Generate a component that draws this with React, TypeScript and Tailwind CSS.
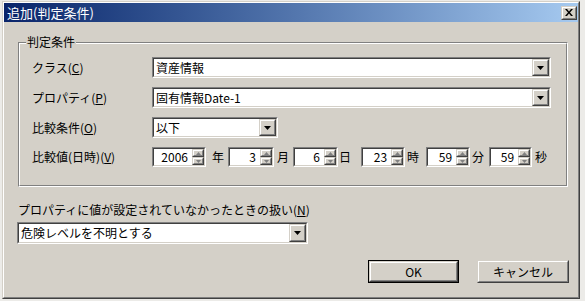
import React from "react";

// classic 3D borders
function Raised({ className = "", children }: { className?: string; children?: React.ReactNode }) {
  return (
    <div className={`border border-t-[#d4d0c8] border-l-[#d4d0c8] border-r-[#404040] border-b-[#404040] ${className}`}>
      <div className="flex h-full w-full items-center justify-center border border-t-white border-l-white border-r-[#808080] border-b-[#808080] bg-[#d4d0c8]">
        {children}
      </div>
    </div>
  );
}

function Sunken({ className = "", children }: { className?: string; children?: React.ReactNode }) {
  return (
    <div className={`border border-t-[#808080] border-l-[#808080] border-r-white border-b-white ${className}`}>
      <div className="flex h-full w-full items-center border border-t-[#404040] border-l-[#404040] border-r-[#d4d0c8] border-b-[#d4d0c8] bg-white">
        {children}
      </div>
    </div>
  );
}

function DownArrow() {
  return (
    <svg width="7" height="4" viewBox="0 0 7 4">
      <path d="M0 0h7L3.5 4z" fill="#000" />
    </svg>
  );
}

function ComboBox({ value, className }: { value: string; className: string }) {
  return (
    <Sunken className={className}>
      <span className="flex-1 truncate pl-[2px] leading-[16px]">{value}</span>
      <Raised className="h-full w-[17px]">
        <DownArrow />
      </Raised>
    </Sunken>
  );
}

function SpinBox({ value, className }: { value: string; className: string }) {
  return (
    <Sunken className={`h-[20px] ${className}`}>
      <span className="flex-1 pr-[4px] text-right leading-[16px]">{value}</span>
      <div className="flex h-full w-[12px] flex-col">
        <Raised className="h-1/2 w-full">
          <svg width="5" height="3" viewBox="0 0 5 3">
            <path d="M2.5 0L5 3H0z" fill="#808080" />
          </svg>
        </Raised>
        <Raised className="h-1/2 w-full">
          <svg width="5" height="3" viewBox="0 0 5 3">
            <path d="M0 0h5L2.5 3z" fill="#808080" />
          </svg>
        </Raised>
      </div>
    </Sunken>
  );
}

function Label({ text, hot }: { text: string; hot: string }) {
  return (
    <span className="w-[120px] leading-[16px]">
      {text}(<span className="underline">{hot}</span>)
    </span>
  );
}

function PushButton({ label, isDefault }: { label: string; isDefault?: boolean }) {
  return (
    <div className={`h-[23px] ${isDefault ? "w-[91px] border border-black" : "w-[92px]"}`}>
      <Raised className="h-full w-full">
        <span className="leading-[16px]">{label}</span>
      </Raised>
    </div>
  );
}

export default function App() {
  return (
    <div className="h-[301px] w-[585px] bg-[#ecebe8] pl-[2px] pt-[1px] font-['Noto_Sans_CJK_JP','Liberation_Sans',sans-serif] text-[12px] text-black">
      <div className="h-[298px] w-[578px] border border-t-[#d4d0c8] border-l-[#d4d0c8] border-r-[#404040] border-b-[#404040]">
        <div className="flex h-full w-full flex-col border border-t-white border-l-white border-r-[#808080] border-b-[#808080] bg-[#d4d0c8]">
          {/*Title bar*/}
          <div className="flex h-[19px] items-center justify-between bg-gradient-to-r from-[#0a246a] to-[#a6caf0] pl-[3px] pr-[1px]">
            <span className="text-[13px] leading-[17px] text-white">追加(判定条件)</span>
            <Raised className="h-[14px] w-[16px]">
              <svg width="8" height="7" viewBox="0 0 8 7">
                <path d="M0 0h2l2 2.5L6 0h2L5 3.5 8 7H6L4 4.5 2 7H0l3-3.5z" fill="#000" />
              </svg>
            </Raised>
          </div>

          {/*Group box*/}
          <div className="relative ml-[14px] mt-[20px] w-[550px] border border-t-[#808080] border-l-[#808080] border-r-white border-b-white">
            <div className="flex flex-col gap-[9px] border border-t-white border-l-white border-r-[#808080] border-b-[#808080] pb-[18px] pl-[12px] pr-[15px] pt-[13px]">
              <div className="flex h-[21px] items-center">
                <Label text="クラス" hot="C" />
                <ComboBox value="資産情報" className="h-[21px] w-[399px]" />
              </div>
              <div className="flex h-[21px] items-center">
                <Label text="プロパティ" hot="P" />
                <ComboBox value="固有情報Date-1" className="h-[21px] w-[399px]" />
              </div>
              <div className="flex h-[21px] items-center">
                <Label text="比較条件" hot="O" />
                <ComboBox value="以下" className="h-[21px] w-[126px]" />
              </div>
              <div className="flex h-[20px] items-center">
                <Label text="比較値(日時)" hot="V" />
                <SpinBox value="2006" className="w-[54px]" />
                <span className="ml-[6px]">年</span>
                <SpinBox value="3" className="ml-[4px] w-[46px]" />
                <span className="ml-[3px]">月</span>
                <SpinBox value="6" className="ml-[4px] w-[45px]" />
                <span className="ml-[1px]">日</span>
                <SpinBox value="23" className="ml-[10px] w-[44px]" />
                <span className="ml-[2px]">時</span>
                <SpinBox value="59" className="ml-[7px] w-[44px]" />
                <span className="ml-[2px]">分</span>
                <SpinBox value="59" className="ml-[5px] w-[43px]" />
                <span className="ml-[3px]">秒</span>
              </div>
            </div>
            <span className="absolute left-[7px] top-[-9px] bg-[#d4d0c8] px-[1px] leading-[16px]">判定条件</span>
          </div>

          {/*Unset value handling*/}
          <span className="ml-[14px] mt-[15px] leading-[16px]">
            プロパティに値が設定されていなかったときの扱い(<span className="underline">N</span>)
          </span>
          <div className="ml-[13px] mt-[4px]">
            <ComboBox value="危険レベルを不明とする" className="h-[22px] w-[291px]" />
          </div>

          {/*Buttons*/}
          <div className="mt-[16px] flex justify-end gap-[18px] pr-[9px]">
            <PushButton label="OK" isDefault />
            <PushButton label="キャンセル" />
          </div>
        </div>
      </div>
    </div>
  );
}
